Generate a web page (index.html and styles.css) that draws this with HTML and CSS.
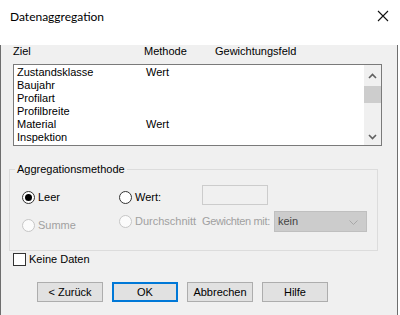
FILE: index.html
```html
<!DOCTYPE html>
<html lang="de">
<head>
    <meta charset="UTF-8">
    <title>Datenaggregation</title>
    <link rel="stylesheet" href="styles.css">
</head>
<body>
    <div class="window">
        <!-- Titelleiste -->
        <div class="titlebar">
            <span class="title">Datenaggregation</span>
            <svg class="close" width="12" height="12" viewBox="0 0 12 12">
                <path d="M1 1 L11 11 M11 1 L1 11" stroke="#111" stroke-width="1.1" fill="none"/>
            </svg>
        </div>

        <div class="dialog">
            <!-- Spaltenköpfe -->
            <div class="cols">
                <span class="col-ziel">Ziel</span>
                <span class="col-meth">Methode</span>
                <span>Gewichtungsfeld</span>
            </div>

            <!-- Liste -->
            <div class="listbox">
                <div class="rows">
                    <div class="row"><span class="cell-ziel">Zustandsklasse</span><span>Wert</span></div>
                    <div class="row"><span class="cell-ziel">Baujahr</span></div>
                    <div class="row"><span class="cell-ziel">Profilart</span></div>
                    <div class="row"><span class="cell-ziel">Profilbreite</span></div>
                    <div class="row"><span class="cell-ziel">Material</span><span>Wert</span></div>
                    <div class="row"><span class="cell-ziel">Inspektion</span></div>
                </div>
                <div class="scrollbar">
                    <div class="sb-btn sb-up">
                        <svg width="9" height="6" viewBox="0 0 9 6"><polyline points="1,5 4.5,1.5 8,5" stroke="#606060" stroke-width="1.6" fill="none"/></svg>
                    </div>
                    <div class="sb-thumb"></div>
                    <div class="sb-track"></div>
                    <div class="sb-btn sb-down">
                        <svg width="9" height="6" viewBox="0 0 9 6"><polyline points="1,1 4.5,4.5 8,1" stroke="#606060" stroke-width="1.6" fill="none"/></svg>
                    </div>
                </div>
            </div>

            <!-- Aggregationsmethode -->
            <fieldset class="group">
                <legend>Aggregationsmethode</legend>
                <div class="opts">
                    <div class="opt-row first">
                        <label class="radio-label col1"><span class="radio checked"></span>Leer</label>
                        <label class="radio-label col2"><span class="radio"></span>Wert:</label>
                        <div class="col3"><span class="textbox"></span></div>
                    </div>
                    <div class="opt-row second">
                        <label class="radio-label col1 disabled summe"><span class="radio"></span>Summe</label>
                        <label class="radio-label col2 disabled"><span class="radio"></span>Durchschnitt</label>
                        <div class="col3">
                            <span class="weight-label">Gewichten mit:</span>
                            <span class="combo">kein
                                <svg class="combo-arrow" width="9" height="5" viewBox="0 0 9 5"><polyline points="0.5,0.5 4.5,4.5 8.5,0.5" stroke="#a8a8a8" stroke-width="1" fill="none"/></svg>
                            </span>
                        </div>
                    </div>
                </div>
            </fieldset>

            <label class="check"><span class="box"></span>Keine Daten</label>

            <!-- Schaltflächen -->
            <div class="buttons">
                <button>&lt; Zurück</button>
                <button class="default">OK</button>
                <button>Abbrechen</button>
                <button>Hilfe</button>
            </div>
        </div>
    </div>
</body>
</html>
```

FILE: styles.css
```css
/* Allgemein */
body { margin: 0; background: #ffffff; font-family: "Liberation Sans", Arial, sans-serif; font-size: 11px; line-height: 13px; color: #000; }
.window { width: 398px; }

/* Titelleiste */
.titlebar { height: 31px; background: #fff; display: flex; align-items: center; justify-content: space-between; padding: 0 9px 0 10px; }
.titlebar .title { font-family: "Lato", "Liberation Sans", sans-serif; font-size: 12px; color: #000; padding-top: 1px; }
.titlebar .close { display: block; }

/* Dialogfläche */
.dialog { background: #f0f0f0; border: 1px solid #6e6e6e; border-top: none; height: 282px; }

.cols { display: flex; margin: 14px 0 0 12px; height: 13px; }
.col-ziel { width: 131px; }
.col-meth { width: 71px; }

/* Liste */
.listbox { display: flex; margin: 6px 0 0 12px; width: 369px; height: 82px; box-sizing: border-box; border: 1px solid #7a7a7a; background: #fff; }
.rows { flex: 1; padding: 1px 0 0 3px; }
.row { display: flex; height: 13px; }
.cell-ziel { width: 129px; }
.scrollbar { width: 17px; background: #f0f0f0; display: flex; flex-direction: column; }
.sb-btn { display: flex; align-items: center; justify-content: center; }
.sb-up { height: 21px; }
.sb-down { height: 17px; }
.sb-thumb { height: 17px; background: #cdcdcd; }
.sb-track { flex: 1; }

/* Gruppe */
.group { margin: 17px 0 0 8px; width: 369px; box-sizing: border-box; border: 1px solid #dcdcdc; padding: 9px 0 18px 5px; min-width: 0; }
.group legend { padding: 0 2px; line-height: 13px; height: 13px; }
.opts { margin-left: 7px; }
.opt-row { display: flex; align-items: center; white-space: nowrap; }
.opt-row.first { height: 20px; }
.opt-row.second { height: 21px; margin-top: 6px; }
.col1 { width: 97px; flex: none; }
.col2 { width: 83px; flex: none; }
.col3 { display: flex; align-items: center; flex: none; }
.opt-row.first .radio-label { margin-top: 4px; }
.radio-label.summe { margin-top: 8px; }

.radio-label { display: flex; align-items: center; gap: 3px; }
.radio { width: 13px; height: 13px; box-sizing: border-box; border: 1px solid #333; border-radius: 50%; background: #fff; display: flex; align-items: center; justify-content: center; flex: none; }
.radio.checked::after { content: ""; width: 7px; height: 7px; border-radius: 50%; background: #000; }
.disabled { color: #a0a0a0; }
.disabled .radio { border-color: #c6c6c6; background: #fbfbfb; }

.textbox { display: block; width: 66px; height: 20px; box-sizing: border-box; border: 1px solid #cccccc; background: #f0f0f0; }
.weight-label { width: 72px; flex: none; color: #a0a0a0; letter-spacing: -0.35px; }
.combo { position: relative; flex: none; width: 93px; height: 21px; box-sizing: border-box; border: 1px solid #bfbfbf; background: #cccccc; color: #444; padding-left: 3px; display: flex; align-items: center; }
.combo-arrow { position: absolute; right: 8px; top: 8px; }

/* Checkbox */
.check { display: flex; align-items: center; gap: 3px; margin: 2px 0 0 12px; height: 13px; }
.check .box { width: 13px; height: 13px; box-sizing: border-box; border: 1px solid #333; background: #fff; }

/* Schaltflächen */
.buttons { display: flex; gap: 9px; margin: 16px 0 0 36px; }
.buttons button { width: 66px; height: 20px; box-sizing: border-box; border: 1px solid #adadad; background: #e1e1e1; font-family: "Liberation Sans", Arial, sans-serif; font-size: 11px; color: #000; padding: 0; }
.buttons button.default { border: 2px solid #0078d7; }
```
